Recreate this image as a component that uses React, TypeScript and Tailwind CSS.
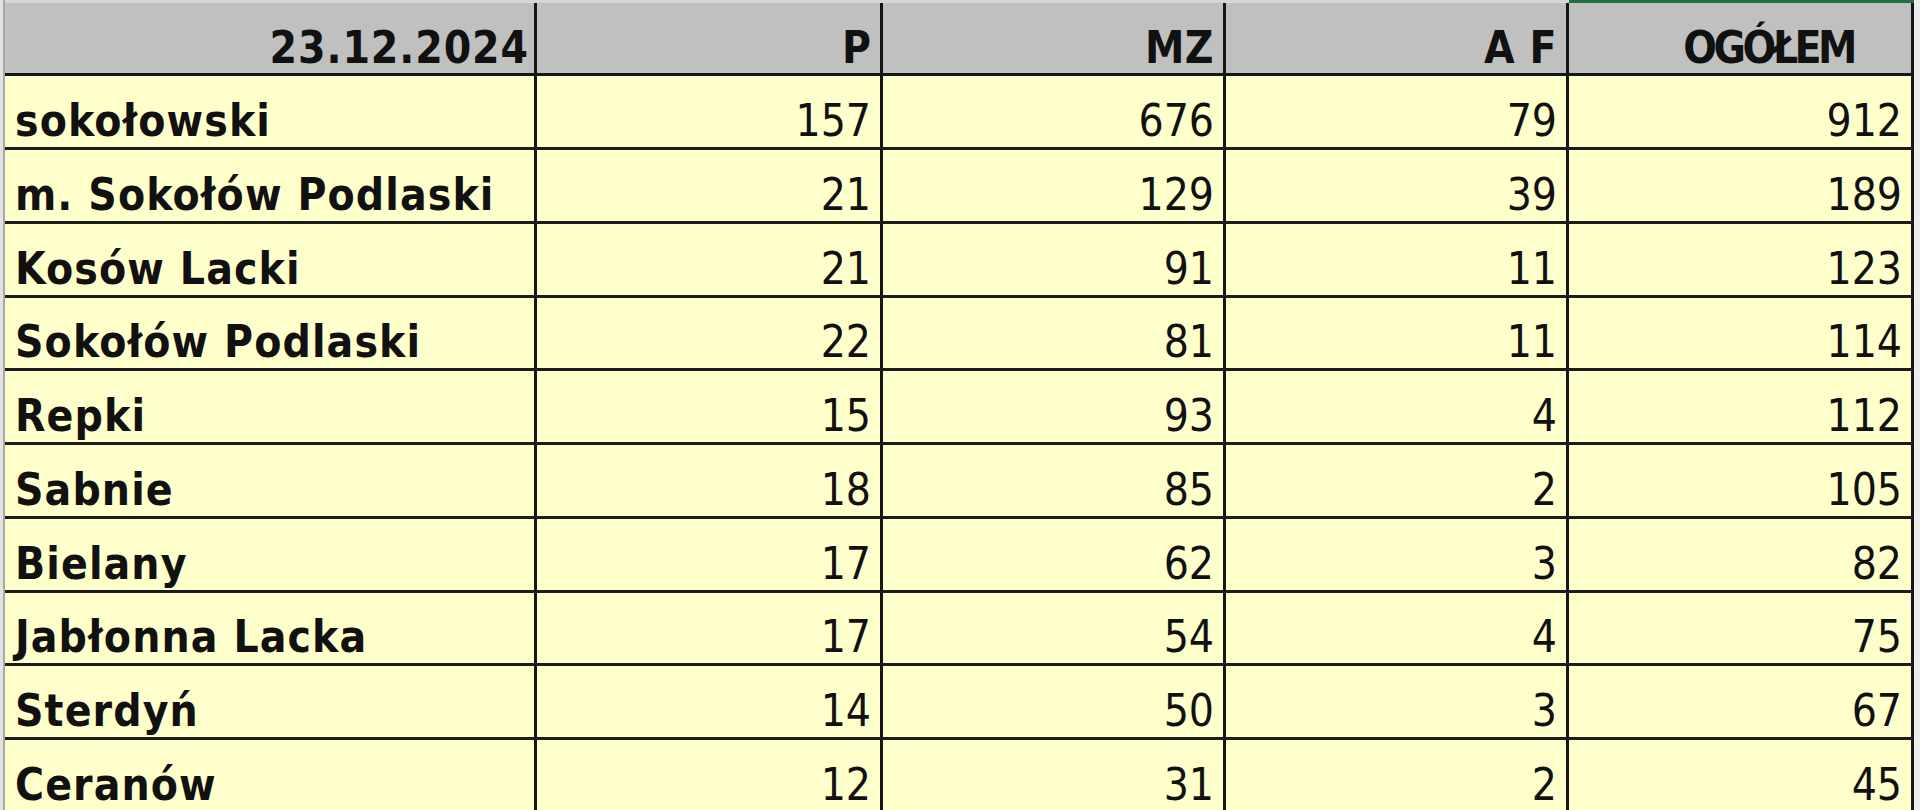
import React from "react";

const rows: [string, number, number, number, number][] = [
  ["sokołowski", 157, 676, 79, 912],
  ["m. Sokołów Podlaski", 21, 129, 39, 189],
  ["Kosów Lacki", 21, 91, 11, 123],
  ["Sokołów Podlaski", 22, 81, 11, 114],
  ["Repki", 15, 93, 4, 112],
  ["Sabnie", 18, 85, 2, 105],
  ["Bielany", 17, 62, 3, 82],
  ["Jabłonna Lacka", 17, 54, 4, 75],
  ["Sterdyń", 14, 50, 3, 67],
  ["Ceranów", 12, 31, 2, 45],
];

const heights = ["h-[74px]", "h-[74px]", "h-[74px]", "h-[73px]", "h-[74px]", "h-[74px]", "h-[74px]", "h-[73px]", "h-[74px]", "h-[74px]"];

const font = { fontFamily: '"DejaVu Sans Condensed", "DejaVu Sans", sans-serif' };

export default function App() {
  return (
    <div className="w-[1920px] h-[810px] overflow-hidden bg-[#f0f0f0] flex" style={font}>
      <div className="w-[3px] shrink-0 bg-[#e2e2e2]" />
      <div className="w-[1911px] shrink-0 border-l-2 border-[#a8a8a8] flex flex-col">
        <div className="h-[3px] shrink-0 flex">
          <div className="w-[1564px] bg-[#d6d6d6]" />
          <div className="w-[345px] bg-[#1f7144]" />
        </div>
        <div className="h-[73px] shrink-0 flex bg-[#c0c0c0] border-b-[3px] border-[#151515] text-[44px] leading-none font-bold text-[#111] font-stretch-condensed">
          <div className="w-[532px] border-r-[3px] border-[#151515] flex items-end justify-end pr-[5px] pb-[3px] tracking-[0.9px]">23.12.2024</div>
          <div className="w-[346px] border-r-[3px] border-[#151515] flex items-end justify-end pr-[9px] pb-[3px]">P</div>
          <div className="w-[343px] border-r-[3px] border-[#151515] flex items-end justify-end pr-[9px] pb-[3px] tracking-[0.5px]">MZ</div>
          <div className="w-[343px] border-r-[3px] border-[#151515] flex items-end justify-end pr-[9px] pb-[3px] tracking-[0.5px]">A F</div>
          <div className="w-[345px] border-r-[3px] border-[#151515] flex items-end justify-end pr-[57px] pb-[3px] tracking-[-3.5px]">OGÓŁEM</div>
        </div>
        {rows.map((r, i) => (
          <div key={r[0]} className={`${heights[i]} shrink-0 flex bg-[#ffffcc] border-b-[3px] border-[#1c1c1c] text-[44px] leading-none text-[#111] font-stretch-condensed`}>
            <div className="w-[532px] border-r-[3px] border-[#151515] flex items-end pl-[10px] pb-[4px] font-bold tracking-[1.1px]">{r[0]}</div>
            <div className="w-[346px] border-r-[3px] border-[#151515] flex items-end justify-end pr-[9px] pb-[4px]">{r[1]}</div>
            <div className="w-[343px] border-r-[3px] border-[#151515] flex items-end justify-end pr-[9px] pb-[4px]">{r[2]}</div>
            <div className="w-[343px] border-r-[3px] border-[#151515] flex items-end justify-end pr-[9px] pb-[4px]">{r[3]}</div>
            <div className="w-[345px] border-r-[3px] border-[#151515] flex items-end justify-end pr-[9px] pb-[4px]">{r[4]}</div>
          </div>
        ))}
      </div>
      <div className="flex-1 bg-[#ededed]" />
    </div>
  );
}
